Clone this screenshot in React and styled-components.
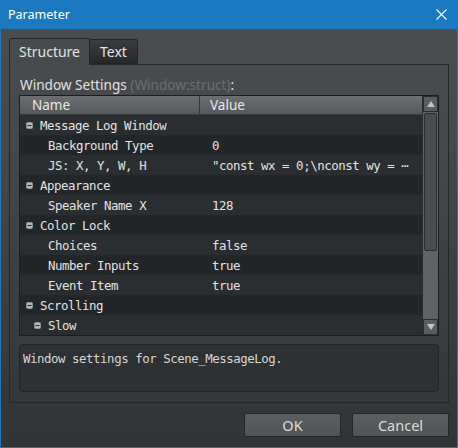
import React from 'react'
import styled, { createGlobalStyle } from 'styled-components'

const GlobalStyle = createGlobalStyle`
  html, body {
    margin: 0;
    padding: 0;
    background: #1b7abf;
  }
`

const rows = [
  { label: 'Message Log Window', group: true, depth: 0 },
  { label: 'Background Type', value: '0', depth: 1 },
  { label: 'JS: X, Y, W, H', value: '"const wx = 0;\\nconst wy = ⋯', depth: 1 },
  { label: 'Appearance', group: true, depth: 0 },
  { label: 'Speaker Name X', value: '128', depth: 1 },
  { label: 'Color Lock', group: true, depth: 0 },
  { label: 'Choices', value: 'false', depth: 1 },
  { label: 'Number Inputs', value: 'true', depth: 1 },
  { label: 'Event Item', value: 'true', depth: 1 },
  { label: 'Scrolling', group: true, depth: 0 },
  { label: 'Slow', group: true, depth: 1 },
]

const Window = styled.div`
  width: 458px;
  height: 448px;
  box-sizing: border-box;
  background: #1b7abf;
  display: flex;
  flex-direction: column;
  font-family: 'Noto Sans', 'Open Sans', sans-serif;
`

const TitleBar = styled.div`
  height: 29px;
  flex: none;
  display: flex;
  align-items: center;
  justify-content: space-between;
  padding: 0 11px 0 8px;
  color: #ffffff;
  font-size: 12.5px;
`

const Body = styled.div`
  flex: 1;
  margin: 0 1px 1px 1px;
  background: linear-gradient(#4a4d50, #45484b 30%, #3a3d40 70%, #313437);
  display: flex;
  flex-direction: column;
  padding: 9px 8px 10px 8px;
`

const TabBar = styled.div`
  display: flex;
  align-items: flex-end;
  height: 26px;
  position: relative;
  z-index: 1;
`

const Tab = styled.div`
  box-sizing: border-box;
  height: ${(p) => (p.active ? '27px' : '25px')};
  margin-bottom: ${(p) => (p.active ? '-1px' : '0')};
  margin-left: ${(p) => (p.active ? '0' : '-1px')};
  padding: 0 ${(p) => (p.active ? '9px' : '10px')} ${(p) => (p.active ? '1px' : '0')};
  display: flex;
  align-items: center;
  font-size: 14px;
  color: ${(p) => (p.active ? '#e2e2e2' : '#e6e6e6')};
  border: 1px solid #222528;
  border-bottom: ${(p) => (p.active ? 'none' : '1px solid #222528')};
  border-radius: 2px 2px 0 0;
  background: ${(p) => (p.active ? '#484b4e' : 'linear-gradient(#3a3d40, #26292c)')};
`

const Panel = styled.div`
  box-sizing: border-box;
  height: 339px;
  border: 1px solid #25282b;
  padding: 11px 9px 10px 9px;
  display: flex;
  flex-direction: column;
`

const Label = styled.div`
  height: 18px;
  line-height: 18px;
  margin-bottom: 1px;
  padding-left: 1px;
  font-size: 13.6px;
  color: #e0e0e0;
`

const Dim = styled.span`
  color: #6b6e71;
`

const Table = styled.div`
  box-sizing: border-box;
  height: 241px;
  border: 1px solid #1c1f22;
  display: flex;
`

const TableMain = styled.div`
  flex: 1;
  display: flex;
  flex-direction: column;
  overflow: hidden;
`

const HeaderRow = styled.div`
  height: 19px;
  flex: none;
  display: flex;
  background: linear-gradient(#6c6f72, #56595c);
  border-bottom: 1px solid #3a3d40;
  box-sizing: border-box;
  font-size: 13.5px;
  color: #e8e8e8;
`

const HeaderCell = styled.div`
  width: ${(p) => p.w || 'auto'};
  flex: ${(p) => (p.w ? 'none' : '1')};
  box-sizing: border-box;
  padding-left: ${(p) => p.pad}px;
  line-height: 18px;
  border-right: ${(p) => (p.w ? '1px solid #35383b' : 'none')};
`

const Rows = styled.div`
  flex: 1;
  overflow: hidden;
  font-family: 'DejaVu Sans Mono', 'Liberation Mono', monospace;
  font-size: 12.4px;
  letter-spacing: -0.45px;
  color: #e2e2e2;
`

const Row = styled.div`
  height: 20px;
  display: flex;
  align-items: center;
  background: ${(p) => (p.odd ? '#2b2e31' : '#232629')};
  white-space: nowrap;
`

const NameCell = styled.div`
  width: 180px;
  flex: none;
  box-sizing: border-box;
  padding-left: ${(p) => p.indent}px;
  display: flex;
  align-items: center;
`

const ValueCell = styled.div`
  flex: 1;
  padding-left: 12px;
  overflow: hidden;
`

const Expander = styled.svg`
  width: 7px;
  height: 7px;
  flex: none;
  margin-right: 7px;
`

const ScrollBar = styled.div`
  width: 16px;
  flex: none;
  display: flex;
  flex-direction: column;
  background: #606366;
  border-left: 1px solid #2a2d30;
  box-sizing: border-box;
`

const ArrowButton = styled.div`
  height: 16px;
  flex: none;
  box-sizing: border-box;
  border: 1px solid #2a2d30;
  background: #5a5d60;
  display: flex;
  align-items: center;
  justify-content: center;
`

const Track = styled.div`
  flex: 1;
  display: flex;
  flex-direction: column;
  padding: 1px 1px 0 1px;
`

const Thumb = styled.div`
  height: 138px;
  box-sizing: border-box;
  border: 1px solid #2a2d30;
  border-radius: 2px;
  background: #494c4f;
`

const Description = styled.div`
  box-sizing: border-box;
  height: 48px;
  margin-top: 8px;
  border: 1px solid #222528;
  border-radius: 4px;
  background: #2e3134;
  padding: 6px 3px;
  font-family: 'DejaVu Sans Mono', 'Liberation Mono', monospace;
  font-size: 12.4px;
  letter-spacing: -0.45px;
  color: #d6d6d6;
  line-height: 16px;
`

const Footer = styled.div`
  display: flex;
  justify-content: flex-end;
  gap: 11px;
  margin-top: 10px;
`

const Button = styled.button`
  width: 97px;
  height: 24px;
  box-sizing: border-box;
  border: 1px solid #24272a;
  border-radius: 2px;
  background: linear-gradient(#5c5f62, #505356);
  color: #dcdcdc;
  font-family: 'Noto Sans', 'Open Sans', sans-serif;
  font-size: 14.5px;
  padding: 0;
`

const Minus = () => (
  <Expander viewBox="0 0 7 7">
    <rect x="0.5" y="0.5" width="6" height="6" rx="1" fill="#b4b7ba" stroke="#8e9194" strokeWidth="1" />
    <rect x="1.5" y="3" width="4" height="1" fill="#2b2e31" />
  </Expander>
)

const Triangle = ({ down }) => (
  <svg width="8" height="6" viewBox="0 0 8 6">
    <polygon points={down ? '0,0 8,0 4,6' : '4,0 8,6 0,6'} fill="#c2c5c8" />
  </svg>
)

export default function App() {
  return (
    <>
      <GlobalStyle />
      <Window>
        <TitleBar>
          <span>Parameter</span>
          <svg width="11" height="11" viewBox="0 0 11 11">
            <path d="M0.5 0.5 L10.5 10.5 M10.5 0.5 L0.5 10.5" stroke="#ffffff" strokeWidth="1.1" />
          </svg>
        </TitleBar>
        <Body>
          <TabBar>
            <Tab active>Structure</Tab>
            <Tab>Text</Tab>
          </TabBar>
          <Panel>
            <Label>
              Window Settings <Dim>(Window:struct)</Dim>:
            </Label>
            <Table>
              <TableMain>
                <HeaderRow>
                  <HeaderCell w="180px" pad={12}>Name</HeaderCell>
                  <HeaderCell pad={10}>Value</HeaderCell>
                </HeaderRow>
                <Rows>
                  {rows.map((r, i) => (
                    <Row key={i} odd={i % 2 === 0}>
                      <NameCell indent={r.group ? 6 + r.depth * 8 : 6 + r.depth * 8 + 14}>
                        {r.group && <Minus />}
                        {r.label}
                      </NameCell>
                      <ValueCell>{r.value}</ValueCell>
                    </Row>
                  ))}
                </Rows>
              </TableMain>
              <ScrollBar>
                <ArrowButton>
                  <Triangle />
                </ArrowButton>
                <Track>
                  <Thumb />
                </Track>
                <ArrowButton>
                  <Triangle down />
                </ArrowButton>
              </ScrollBar>
            </Table>
            <Description>Window settings for Scene_MessageLog.</Description>
          </Panel>
          <Footer>
            <Button>OK</Button>
            <Button>Cancel</Button>
          </Footer>
        </Body>
      </Window>
    </>
  )
}
